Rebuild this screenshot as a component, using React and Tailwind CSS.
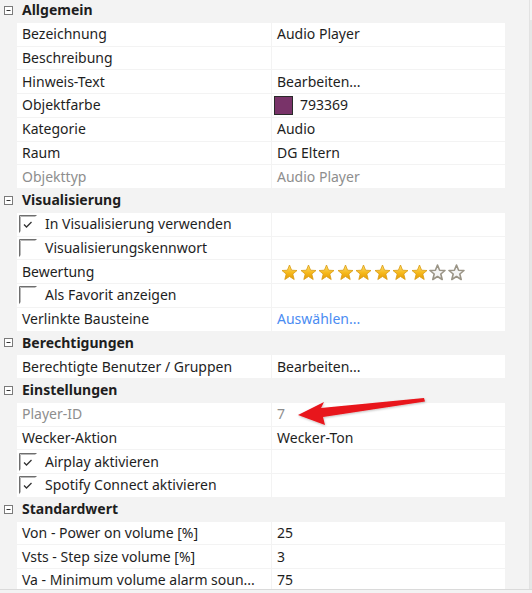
import React from "react";

const sections = [
  {
    title: "Allgemein",
    rows: [
      { label: "Bezeichnung", value: "Audio Player" },
      { label: "Beschreibung", value: "" },
      { label: "Hinweis-Text", value: "Bearbeiten..." },
      { label: "Objektfarbe", value: "793369", color: "#793369" },
      { label: "Kategorie", value: "Audio" },
      { label: "Raum", value: "DG Eltern" },
      { label: "Objekttyp", value: "Audio Player", muted: true },
    ],
  },
  {
    title: "Visualisierung",
    rows: [
      { label: "In Visualisierung verwenden", check: true },
      { label: "Visualisierungskennwort", check: false },
      { label: "Bewertung", stars: 8 },
      { label: "Als Favorit anzeigen", check: false },
      { label: "Verlinkte Bausteine", value: "Auswählen...", link: true },
    ],
  },
  {
    title: "Berechtigungen",
    rows: [{ label: "Berechtigte Benutzer / Gruppen", value: "Bearbeiten..." }],
  },
  {
    title: "Einstellungen",
    rows: [
      { label: "Player-ID", value: "7", muted: true },
      { label: "Wecker-Aktion", value: "Wecker-Ton" },
      { label: "Airplay aktivieren", check: true },
      { label: "Spotify Connect aktivieren", check: true },
    ],
  },
  {
    title: "Standardwert",
    rows: [
      { label: "Von - Power on volume [%]", value: "25" },
      { label: "Vsts - Step size volume [%]", value: "3" },
      { label: "Va - Minimum volume alarm soun...", value: "75" },
    ],
  },
];

function Collapse() {
  return (
    <div className="w-[17px] flex items-center justify-center">
      <svg width="11" height="11" viewBox="0 0 11 11">
        <rect x="1.5" y="1.5" width="8" height="8" fill="#fff" stroke="#7a7a7a" strokeWidth="1" />
        <line x1="3.5" y1="5.5" x2="7.5" y2="5.5" stroke="#333" strokeWidth="1" />
      </svg>
    </div>
  );
}

function CheckBox({ checked }) {
  return (
    <svg width="18" height="18" viewBox="0 0 18 18" className="shrink-0">
      <path d="M0.5 17.5 V0.5 H17.5" fill="none" stroke="#6e6e6e" strokeWidth="1" />
      <path d="M1.5 16.5 V1.5 H16.5" fill="none" stroke="#b8b8b8" strokeWidth="1" />
      {checked && (
        <path d="M5 9.5 L7.5 12 L12.5 7" fill="none" stroke="#333" strokeWidth="1.3" />
      )}
    </svg>
  );
}

function Star({ filled }) {
  const pts = "8.5,1 10.6,6.2 16,6.5 11.8,10 13.2,15.5 8.5,12.5 3.8,15.5 5.2,10 1,6.5 6.4,6.2";
  return (
    <svg width="17" height="17" viewBox="0 0 17 17" className="shrink-0">
      <defs>
        <linearGradient id="sg" x1="0" y1="0" x2="0" y2="1">
          <stop offset="0" stopColor="#ffe070" />
          <stop offset="0.55" stopColor="#f6b81a" />
          <stop offset="1" stopColor="#e39a08" />
        </linearGradient>
      </defs>
      {filled ? (
        <polygon points={pts} fill="url(#sg)" stroke="#d99a10" strokeWidth="0.8" strokeLinejoin="round" />
      ) : (
        <polygon points={pts} fill="#f4f4f4" stroke="#9a9486" strokeWidth="1.6" strokeLinejoin="round" />
      )}
    </svg>
  );
}

function Row({ row }) {
  return (
    <div className="flex h-[22.75px] mb-px pl-[17px] gap-px">
      <div className="w-[254px] bg-white flex items-center overflow-hidden">
        {row.check !== undefined ? (
          <div className="flex items-center pl-[2px]">
            <CheckBox checked={row.check} />
            <span className="pl-[8px] text-[#1e1e1e] whitespace-nowrap">{row.label}</span>
          </div>
        ) : (
          <span
            className={
              "pl-[5px] whitespace-nowrap " + (row.muted ? "text-[#8e8e8e]" : "text-[#1e1e1e]")
            }
          >
            {row.label}
          </span>
        )}
      </div>
      <div className="w-[233px] bg-white flex items-center overflow-hidden">
        {row.stars !== undefined ? (
          <div className="flex items-center gap-[1.5px] pl-[9px] pt-px">
            {Array.from({ length: 10 }).map((_, i) => (
              <Star key={i} filled={i < row.stars} />
            ))}
          </div>
        ) : row.color ? (
          <div className="flex items-center pl-[2px]">
            <div className="w-[19px] h-[19px] border border-[#2a2a2a] bg-[#793369]" />
            <span className="pl-[7px] text-[#1e1e1e]">{row.value}</span>
          </div>
        ) : (
          <span
            className={
              "pl-[5px] whitespace-nowrap " +
              (row.muted ? "text-[#8e8e8e]" : row.link ? "text-[#4a8cf2]" : "text-[#1e1e1e]")
            }
          >
            {row.value}
          </span>
        )}
      </div>
    </div>
  );
}

function Section({ section }) {
  return (
    <div>
      <div className="flex items-center h-[22.75px] mb-px">
        <Collapse />
        <span className="pl-[5px] font-bold text-[#1e1e1e]">{section.title}</span>
      </div>
      {section.rows.map((r, i) => (
        <Row key={i} row={r} />
      ))}
    </div>
  );
}

export default function App() {
  return (
    <div className="relative w-[532px] h-[593px] bg-[#f3f3f3] overflow-hidden font-['Segoe_UI','Noto_Sans',sans-serif] text-[14px] leading-none">
      <div className="flex h-[590px] border-b border-[#dadada] overflow-hidden">
        <div className="w-[529px] -mt-px">
          {sections.map((s, i) => (
            <Section key={i} section={s} />
          ))}
        </div>
        <div className="w-[3px] border-l border-[#e2e2e2] flex flex-col">
          <div className="h-[20px]" />
          <div className="flex-1 bg-[#e6e6e6]" />
        </div>
      </div>
      <svg className="absolute left-0 top-0 pointer-events-none" width="532" height="593">
        <defs>
          <filter id="sh" x="-10%" y="-50%" width="120%" height="200%">
            <feDropShadow dx="0.5" dy="1" stdDeviation="0.8" floodColor="#000" floodOpacity="0.25" />
          </filter>
        </defs>
        <polygon
          points="298,415 324,402 321,408 424,398 425,401.5 323,417 325,425"
          fill="#e8141a"
          filter="url(#sh)"
        />
      </svg>
    </div>
  );
}
